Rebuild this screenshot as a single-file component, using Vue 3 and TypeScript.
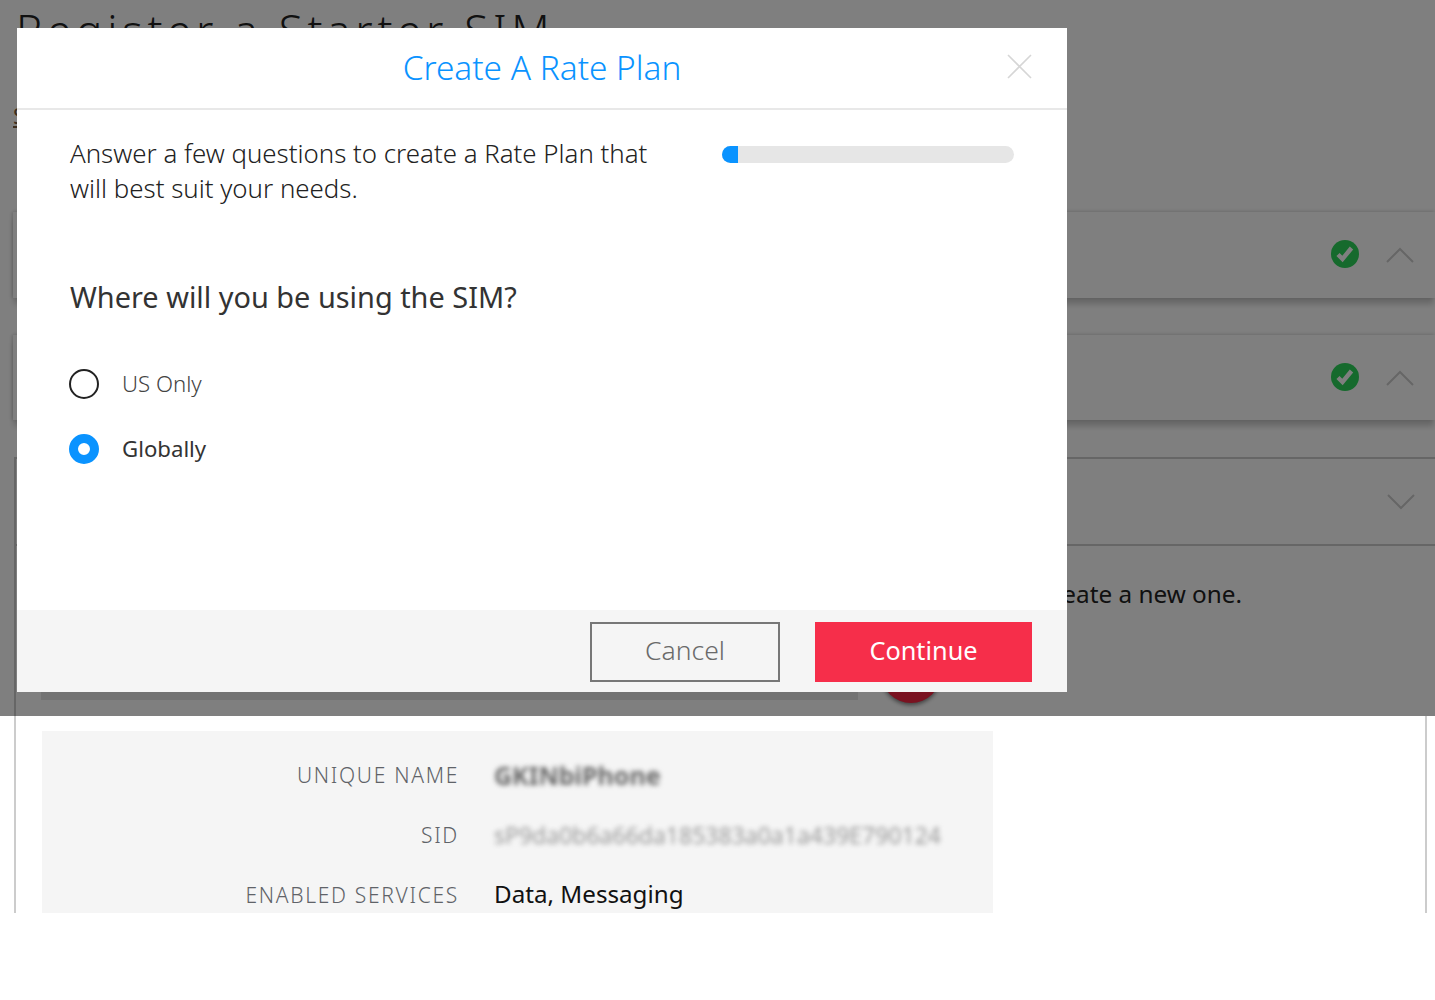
<script setup lang="ts">
import { ref } from 'vue'

const choice = ref<'us' | 'global'>('global')
const details = [
  { label: 'UNIQUE NAME', value: 'GKINbiPhone', kind: 'name' },
  { label: 'SID', value: 'sP9da0b6a66da185383a0a1a439E790124', kind: 'sid' },
  { label: 'ENABLED SERVICES', value: 'Data, Messaging', kind: 'plain' },
]
</script>

<template>
  <div class="page">
    <h1 class="title">Register a Starter SIM</h1>
    <a class="back">SIMs</a>

    <section class="card card-a">
      <svg class="check" viewBox="0 0 28 28"><circle cx="14" cy="14" r="14" fill="#2dd45a" /><path d="M7 14.5l4.5 4.5L20.5 8" fill="none" stroke="#fff" stroke-width="4.4" /></svg>
      <svg class="chev" viewBox="0 0 28 16"><path d="M1 15L14 2l13 13" fill="none" stroke="#ccc" stroke-width="2" /></svg>
    </section>
    <section class="card card-b">
      <svg class="check" viewBox="0 0 28 28"><circle cx="14" cy="14" r="14" fill="#2dd45a" /><path d="M7 14.5l4.5 4.5L20.5 8" fill="none" stroke="#fff" stroke-width="4.4" /></svg>
      <svg class="chev" viewBox="0 0 28 16"><path d="M1 15L14 2l13 13" fill="none" stroke="#ccc" stroke-width="2" /></svg>
    </section>

    <section class="plan">
      <header class="plan-head">
        <svg class="chev" viewBox="0 0 28 16"><path d="M1 1l13 13L27 1" fill="none" stroke="#ccc" stroke-width="2" /></svg>
      </header>
      <div class="plan-top">
        <p class="plan-copy">Select a Rate Plan or create a new one.</p>
        <div class="plan-row">
          <div class="plan-input"></div>
          <div class="plan-add"></div>
        </div>
      </div>
      <div class="plan-lower">
        <dl class="details">
          <div v-for="d in details" :key="d.label" class="detail">
            <dt>{{ d.label }}</dt>
            <dd :class="d.kind">{{ d.value }}</dd>
          </div>
        </dl>
      </div>
    </section>

    <div class="overlay"></div>

    <div class="modal">
      <header class="modal-head">
        <h2>Create A Rate Plan</h2>
        <svg class="close" viewBox="0 0 25 25"><path d="M1 1l23 23M24 1L1 24" fill="none" stroke="#d6d6d6" stroke-width="1.6" /></svg>
      </header>
      <div class="modal-body">
        <div class="intro">
          <p>Answer a few questions to create a Rate Plan that will best suit your needs.</p>
          <div class="progress"><div class="progress-fill" :style="{ width: '16px' }"></div></div>
        </div>
        <h3>Where will you be using the SIM?</h3>
        <label class="option">
          <input v-model="choice" type="radio" value="us" />
          <span class="radio" :class="{ on: choice === 'us' }"></span>
          <span class="opt-text">US Only</span>
        </label>
        <label class="option">
          <input v-model="choice" type="radio" value="global" />
          <span class="radio" :class="{ on: choice === 'global' }"></span>
          <span class="opt-text strong">Globally</span>
        </label>
      </div>
      <footer class="modal-foot">
        <button class="btn cancel">Cancel</button>
        <button class="btn go">Continue</button>
      </footer>
    </div>
  </div>
</template>

<style>
html, body { margin: 0; background: #fff; }
</style>

<style scoped>
.page {
  position: relative;
  width: 1435px;
  height: 1000px;
  overflow: hidden;
  background: #fff;
  font-family: "Noto Sans", "Open Sans", sans-serif;
  color: #222;
}
.title {
  margin: 0;
  height: 100px;
  padding: 0 0 0 16px;
  box-sizing: border-box;
  font-size: 44px;
  font-weight: 300;
  letter-spacing: 4.7px;
  line-height: 60px;
  color: #222;
}
.back {
  display: block;
  margin: 0 0 0 13px;
  height: 112px;
  font-size: 22px;
  line-height: 31px;
  text-decoration: underline;
  color: #7b5a3c;
}
.card {
  display: flex;
  align-items: center;
  justify-content: flex-end;
  gap: 27px;
  margin-left: 13px;
  padding-right: 21px;
  background: #fff;
  box-shadow: 0 7px 6px -1px rgba(0, 0, 0, .2), 0 -2px 3px rgba(0, 0, 0, .07), -2px 0 3px rgba(0, 0, 0, .1);
}
.card-a { height: 86px; margin-bottom: 37px; }
.card-b { height: 85px; margin-bottom: 37px; }
.check { width: 28px; height: 28px; margin-top: -2px; }
.chev { width: 28px; height: 16px; }
.plan {
  margin-left: 14px;
  height: 456px;
  overflow: hidden;
  border-left: 2px solid #ccc;
  box-sizing: border-box;
}
.plan-head {
  display: flex;
  align-items: center;
  justify-content: flex-end;
  height: 89px;
  padding-right: 20px;
  box-sizing: border-box;
  border-top: 2px solid #ccc;
  border-bottom: 2px solid #ccc;
}
.plan-top { height: 170px; padding: 30px 0 0 25px; box-sizing: border-box; }
.plan-copy {
  margin: 0;
  height: 36px;
  font-size: 24.3px;
  line-height: 36px;
  text-align: right;
  padding-right: 193px;
  color: #222;
}
.plan-row { display: flex; align-items: flex-end; gap: 23px; margin-top: 28px; }
.plan-input { width: 817px; height: 60px; background: #e6e6e6; }
.plan-add {
  width: 60px;
  height: 60px;
  margin-bottom: -3px;
  border-radius: 50%;
  background: #f42440;
  box-shadow: 0 2px 4px rgba(0, 0, 0, .5);
}
.plan-lower {
  width: 1411px;
  height: 197px;
  padding: 15px 0 0 26px;
  box-sizing: border-box;
  border-right: 2px solid #ccc;
}
.details {
  margin: 0;
  width: 951px;
  height: 182px;
  overflow: hidden;
  padding-top: 14px;
  box-sizing: border-box;
  background: #f5f5f5;
}
.detail { display: grid; grid-template-columns: 417px 1fr; column-gap: 35px; align-items: center; height: 60px; }
dt {
  text-align: right;
  font-size: 21px;
  font-weight: 300;
  letter-spacing: 1.7px;
  color: #5f6368;
}
dd { margin: 0; font-size: 24.2px; color: #111; }
dd.plain { margin-top: -3px; }
dd.name { filter: blur(2.5px); font-weight: 700; font-size: 25px; color: #666; }
dd.sid { filter: blur(2.5px); font-size: 23px; color: #999; }
.overlay {
  position: absolute;
  left: 0;
  top: 0;
  width: 1435px;
  height: 716px;
  background: rgba(0, 0, 0, .5);
}
.modal {
  position: absolute;
  left: 17px;
  top: 28px;
  width: 1050px;
  height: 664px;
  display: flex;
  flex-direction: column;
  background: #fff;
}
.modal-head {
  position: relative;
  height: 82px;
  flex: none;
  box-sizing: border-box;
  border-bottom: 2px solid #e8e8e8;
  text-align: center;
}
.modal-head h2 {
  margin: 0;
  font-size: 33.4px;
  font-weight: 300;
  line-height: 79px;
  color: #0a93ff;
}
.close { position: absolute; left: 990px; top: 26px; width: 25px; height: 25px; }
.modal-body { flex: 1; padding: 0 53px; }
.intro { display: flex; justify-content: space-between; align-items: flex-start; padding-top: 26px; }
.intro p { margin: 0; width: 600px; font-size: 25.85px; line-height: 35px; font-weight: 300; color: #222; }
.progress { width: 292px; height: 17px; margin-top: 10px; border-radius: 9px; background: #e6e6e6; overflow: hidden; }
.progress-fill { height: 100%; background: #0a93ff; border-radius: 4px 0 0 4px; }
h3 { margin: 71px 0 34px; font-size: 28.9px; line-height: 40px; font-weight: 400; color: #333; }
.option { display: flex; align-items: center; gap: 23px; height: 65px; margin-left: -1px; }
.option input { display: none; }
.radio { width: 30px; height: 30px; box-sizing: border-box; border: 2px solid #222; border-radius: 50%; background: #fff; }
.radio.on { border: 9px solid #0a93ff; }
.opt-text { font-size: 22.2px; font-weight: 300; color: #444; }
.opt-text.strong { font-weight: 400; color: #333; }
.modal-foot {
  display: flex;
  justify-content: flex-end;
  align-items: flex-start;
  gap: 35px;
  height: 82px;
  padding: 12px 35px 0 0;
  box-sizing: border-box;
  background: #f5f5f5;
}
.btn { height: 60px; font-family: inherit; padding: 0 0 4px; border-radius: 0; }
.cancel { width: 190px; border: 2px solid #777; background: transparent; color: #6a6a6a; font-weight: 300; font-size: 26.5px; }
.go { width: 217px; border: 0; background: #f62e4a; color: #fff; font-size: 25.3px; }
</style>
